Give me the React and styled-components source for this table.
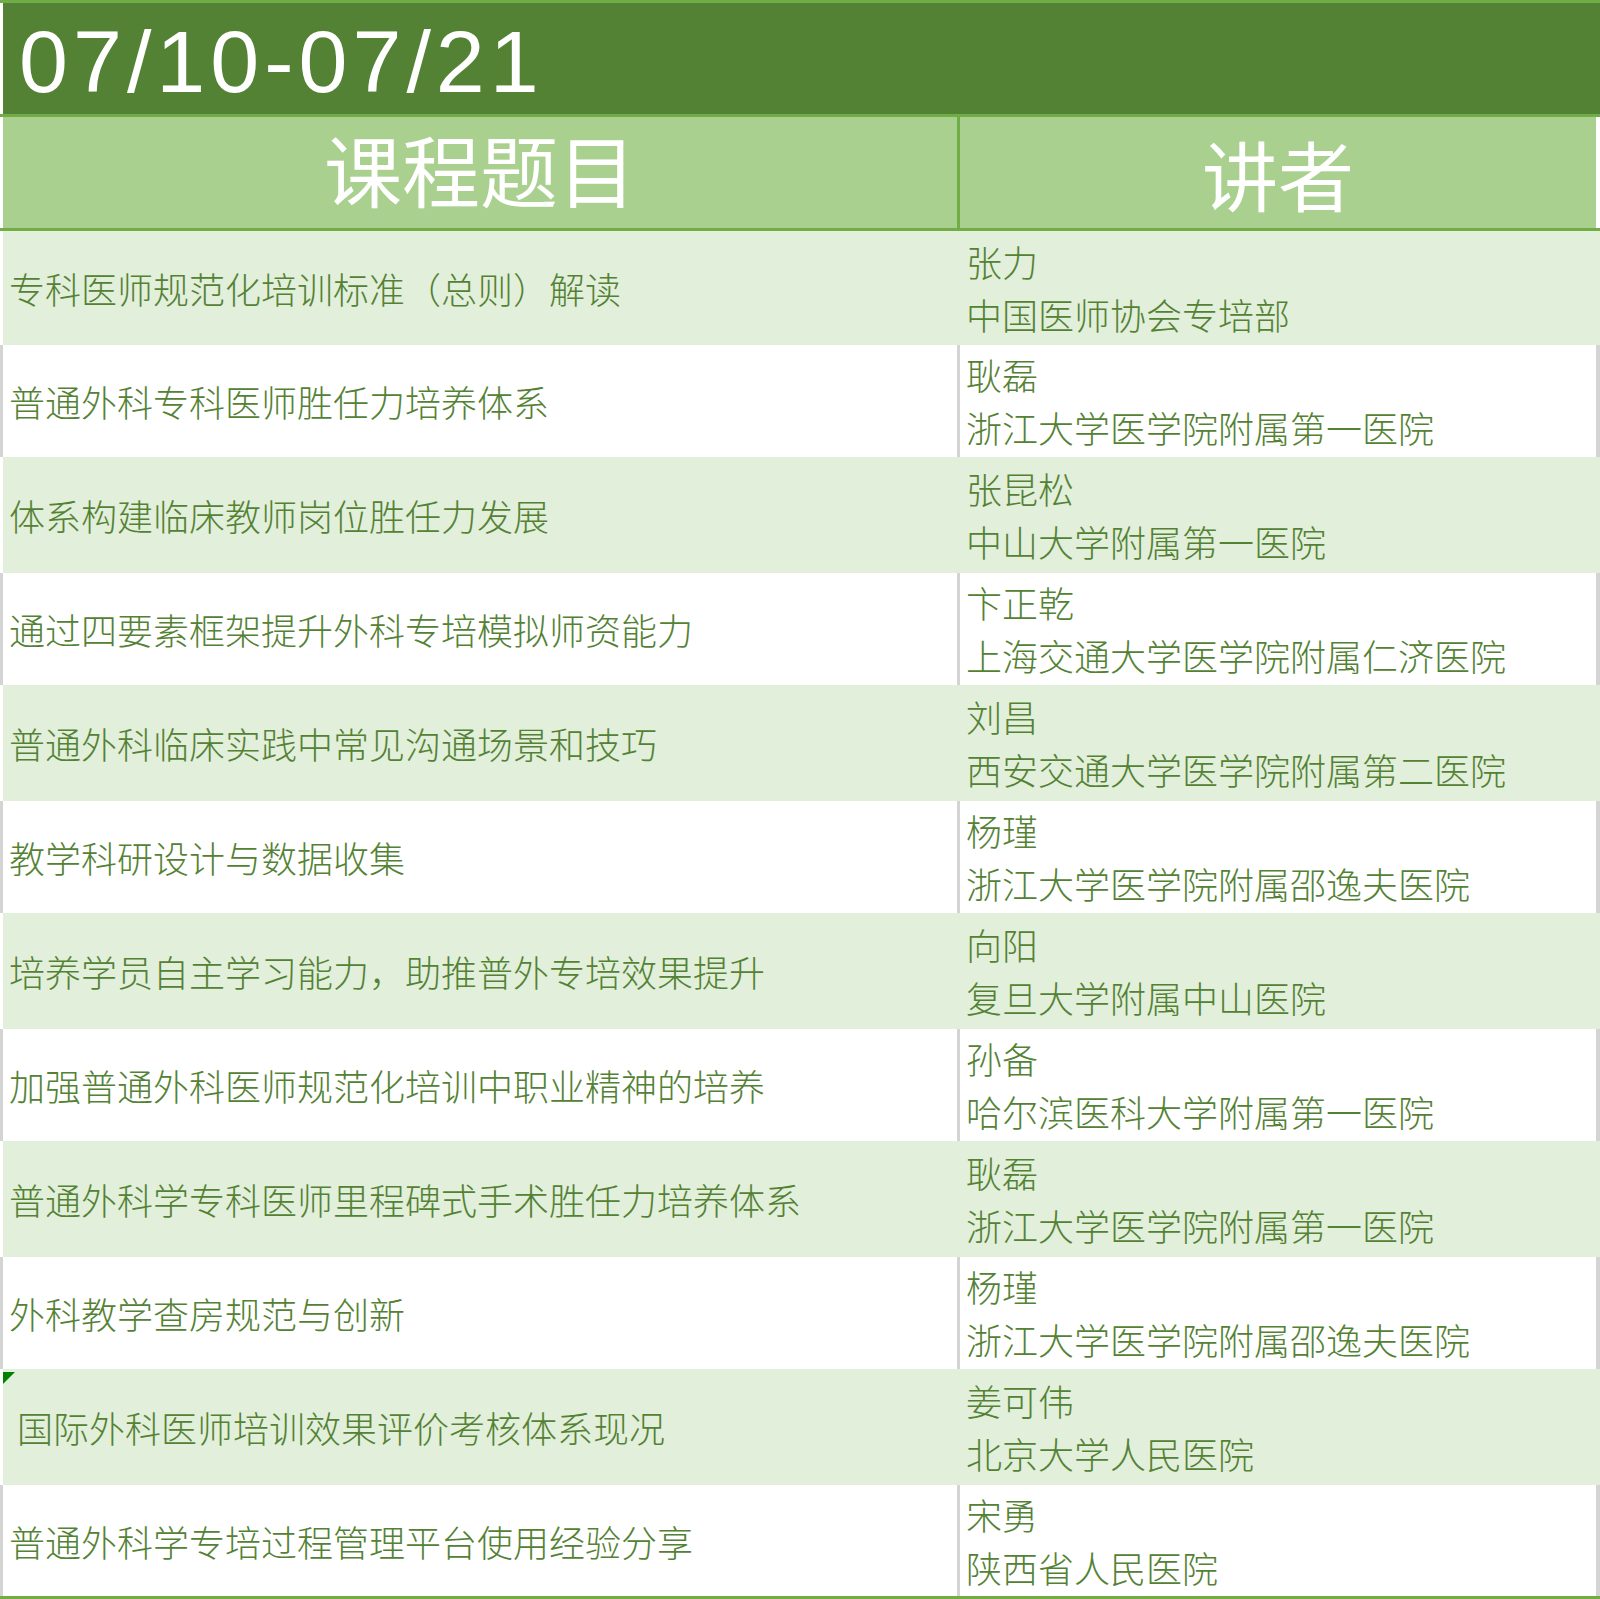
import React from 'react'
import styled, { createGlobalStyle } from 'styled-components'

const GlobalStyle = createGlobalStyle`
  html, body {
    margin: 0;
    padding: 0;
    background: #ffffff;
  }
  body {
    font-family: "Noto Sans CJK SC", "Noto Sans", sans-serif;
  }
`

const Sheet = styled.div`
  width: 1600px;
  display: flex;
  flex-direction: column;
`

const Rule = styled.div`
  height: 3px;
  background: #70ad47;
`

const TitleBar = styled.div`
  height: 111px;
  box-sizing: border-box;
  border-left: 3px solid #ffffff;
  background: #548235;
  display: flex;
  align-items: center;
  padding: 6px 0 0 16px;
`

const Title = styled.h1`
  margin: 0;
  font-family: "Liberation Sans", Arial, sans-serif;
  font-weight: 400;
  font-size: 88px;
  letter-spacing: 5px;
  color: #ffffff;
  line-height: 1;
`

const HeaderRow = styled.div`
  height: 111px;
  box-sizing: border-box;
  display: grid;
  grid-template-columns: 954px 1fr;
  border-left: 3px solid #ffffff;
  border-right: 4px solid #ffffff;
  background: #a9d08e;
`

const HeaderCell = styled.div`
  display: flex;
  align-items: center;
  justify-content: center;
  box-sizing: border-box;
  padding-bottom: ${p => (p.$divider ? 0 : 10)}px;
  font-size: ${p => (p.$divider ? 76 : 78)}px;
  color: #ffffff;
  line-height: 1;
  border-left: ${p => (p.$divider ? '3px solid #70ad47' : 'none')};
`

const Row = styled.div`
  height: ${p => p.$h}px;
  box-sizing: border-box;
  display: grid;
  grid-template-columns: 954px 1fr;
  background: ${p => (p.$shaded ? '#e2efda' : '#ffffff')};
  border-left: 3px solid ${p => (p.$shaded ? '#ffffff' : '#d4d4d4')};
  border-right: ${p => (p.$shaded ? 'none' : '4px solid #d4d4d4')};
`

const TopicCell = styled.div`
  position: relative;
  display: flex;
  align-items: center;
  padding-left: 6px;
  font-size: 36px;
  font-weight: 300;
  color: #548235;
  white-space: pre;
`

const Marker = styled.span`
  position: absolute;
  left: 0;
  top: 3px;
  width: 0;
  height: 0;
  border-top: 12px solid #008000;
  border-right: 12px solid transparent;
`

const SpeakerCell = styled.div`
  display: flex;
  flex-direction: column;
  justify-content: center;
  padding-left: 6px;
  font-size: 36px;
  font-weight: 300;
  line-height: 53px;
  color: #548235;
  white-space: nowrap;
  border-left: 3px solid ${p => (p.$shaded ? 'transparent' : '#d4d4d4')};
`

const rows = [
  ['专科医师规范化培训标准（总则）解读', '张力', '中国医师协会专培部'],
  ['普通外科专科医师胜任力培养体系', '耿磊', '浙江大学医学院附属第一医院'],
  ['体系构建临床教师岗位胜任力发展', '张昆松', '中山大学附属第一医院'],
  ['通过四要素框架提升外科专培模拟师资能力', '卞正乾', '上海交通大学医学院附属仁济医院'],
  ['普通外科临床实践中常见沟通场景和技巧', '刘昌', '西安交通大学医学院附属第二医院'],
  ['教学科研设计与数据收集', '杨瑾', '浙江大学医学院附属邵逸夫医院'],
  ['培养学员自主学习能力，助推普外专培效果提升', '向阳', '复旦大学附属中山医院'],
  ['加强普通外科医师规范化培训中职业精神的培养', '孙备', '哈尔滨医科大学附属第一医院'],
  ['普通外科学专科医师里程碑式手术胜任力培养体系', '耿磊', '浙江大学医学院附属第一医院'],
  ['外科教学查房规范与创新', '杨瑾', '浙江大学医学院附属邵逸夫医院'],
  [' 国际外科医师培训效果评价考核体系现况', '姜可伟', '北京大学人民医院', true],
  ['普通外科学专培过程管理平台使用经验分享', '宋勇', '陕西省人民医院'],
]

const heights = [114, 112, 116, 112, 116, 112, 116, 112, 116, 112, 116, 111]

const App = () => {
  return (
    <Sheet>
      <GlobalStyle />
      <Rule />
      <TitleBar>
        <Title>07/10-07/21</Title>
      </TitleBar>
      <Rule />
      <HeaderRow>
        <HeaderCell>课程题目</HeaderCell>
        <HeaderCell $divider>讲者</HeaderCell>
      </HeaderRow>
      <Rule />
      {rows.map(([topic, name, org, note], i) => {
        const shaded = i % 2 === 0
        return (
          <Row key={i} $shaded={shaded} $h={heights[i]}>
            <TopicCell>
              {note && <Marker />}
              {topic}
            </TopicCell>
            <SpeakerCell $shaded={shaded}>
              <span>{name}</span>
              <span>{org}</span>
            </SpeakerCell>
          </Row>
        )
      })}
      <Rule />
    </Sheet>
  )
}

export default App
